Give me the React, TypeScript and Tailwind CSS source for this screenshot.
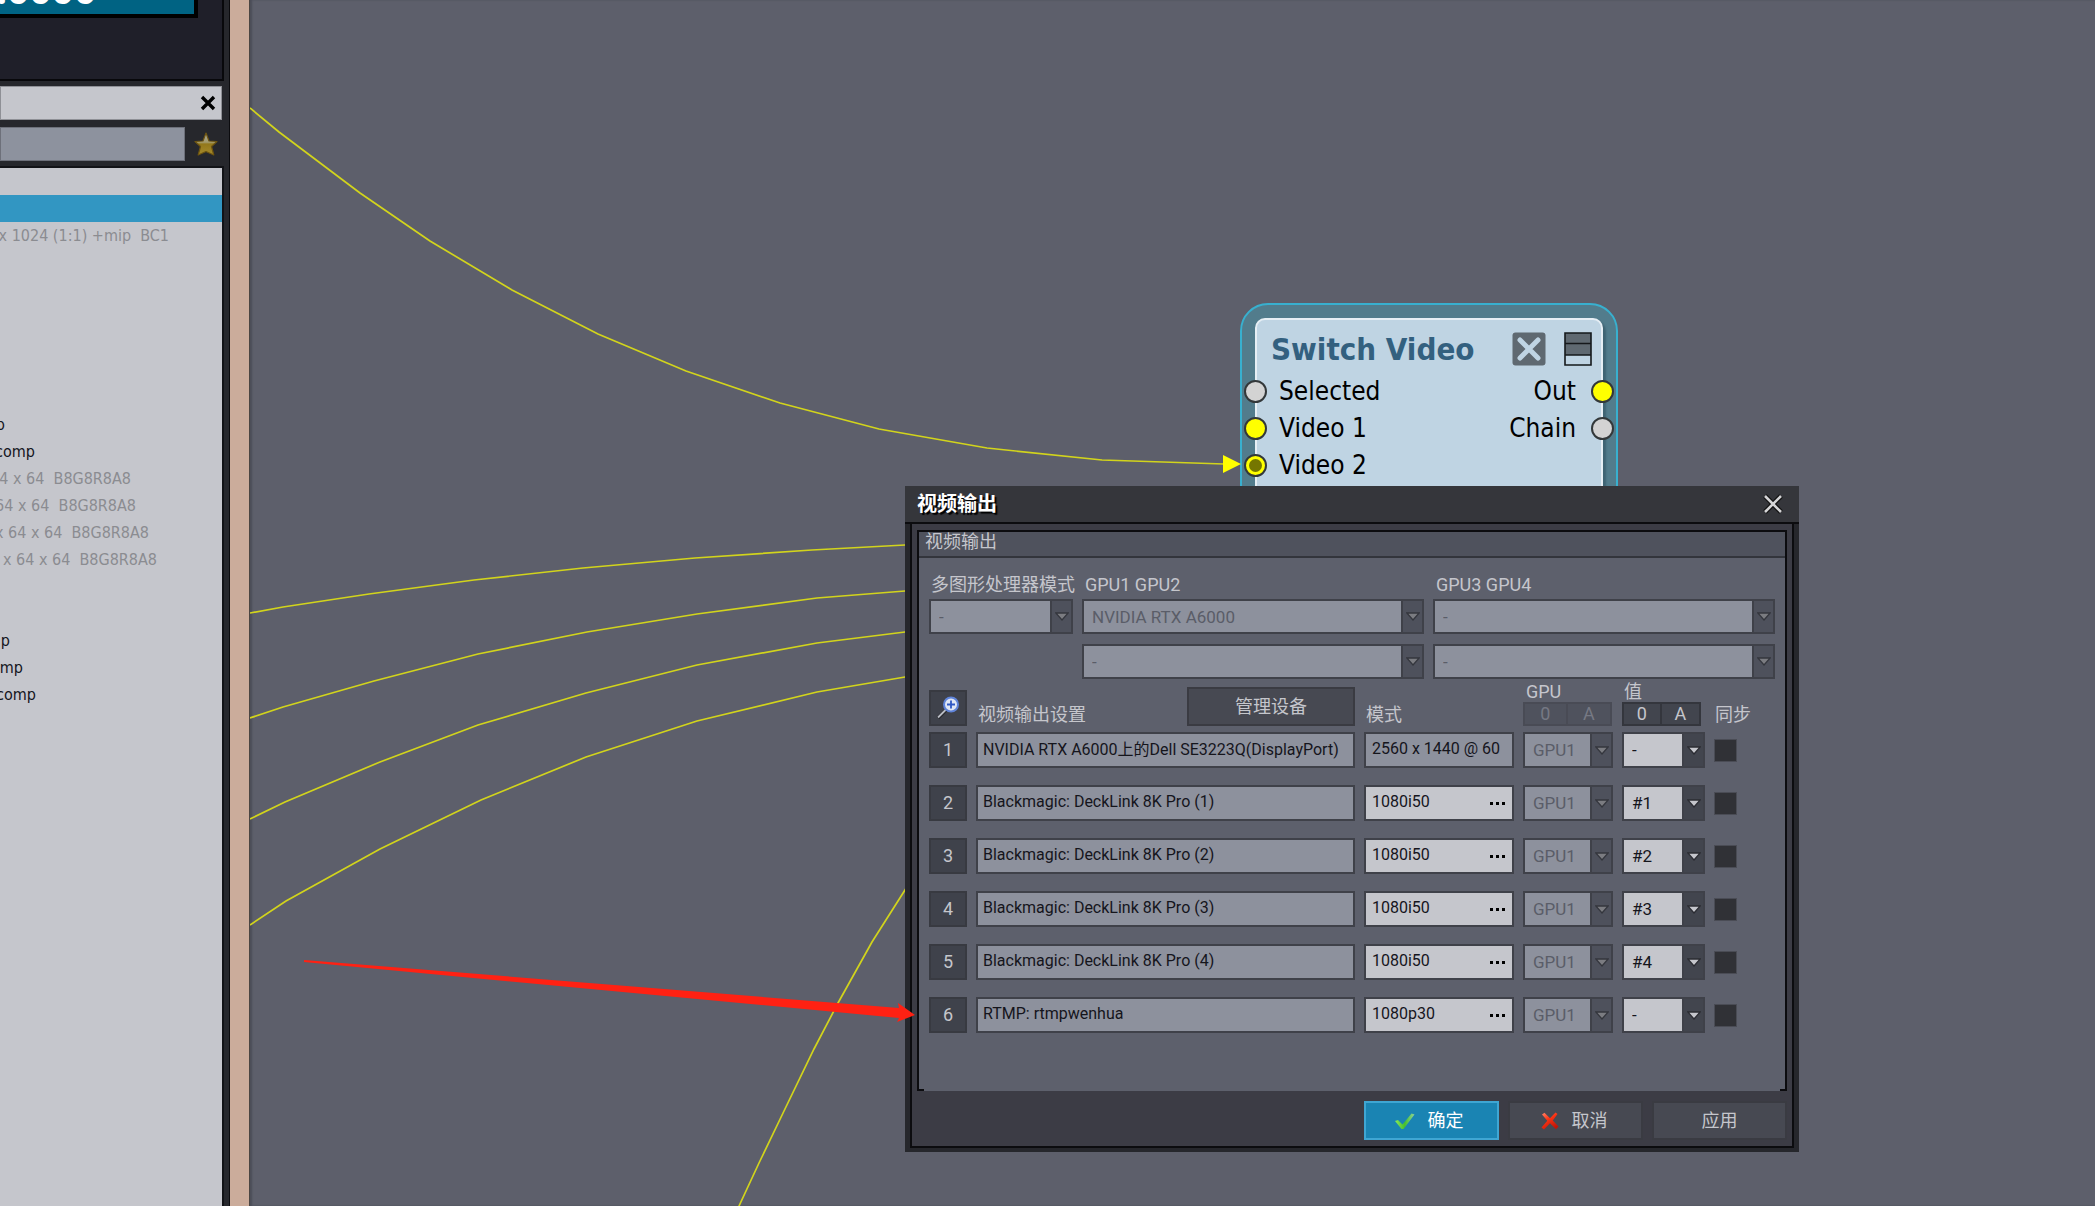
import React from "react";

const UI = "font-['Roboto','Noto_Sans_CJK_SC',sans-serif]";
const TREE = "font-['DejaVu_Sans_Condensed','DejaVu_Sans',sans-serif]";

type ListItem = { text: string; end: number; dim?: boolean } | null;

const listItems: ListItem[] = [
  { text: "x 1024 (1:1) +mip  BC1", end: 169, dim: true },
  null,
  null,
  null,
  null,
  null,
  null,
  { text: "p", end: 5 },
  { text: "comp", end: 35 },
  { text: "4 x 64  B8G8R8A8", end: 131, dim: true },
  { text: "64 x 64  B8G8R8A8", end: 136, dim: true },
  { text: "x 64 x 64  B8G8R8A8", end: 149, dim: true },
  { text: "x 64 x 64  B8G8R8A8", end: 157, dim: true },
  null,
  null,
  { text: "p", end: 10 },
  { text: "mp", end: 23 },
  { text: "comp", end: 36 },
];

const wires = [
  "250,108 279,132 360,193 430,241 512,290 598,334 686,371 780,403 879,429 987,448 1102,460 1224,464",
  "250,613 283,607 369,594 474,580 583,568 695,558 812,550 905,545 960,543",
  "250,718 283,707 374,681 478,654 587,632 697,614 817,598 905,591 960,587",
  "250,819 285,802 380,762 478,725 586,693 697,665 817,643 905,632 960,626",
  "250,925 286,901 380,849 481,800 586,757 697,721 817,692 905,677 960,668",
  "930,850 905,890 872,942 838,1003 814,1049 784,1111 759,1163 739,1206 720,1252",
];

const outputs = [
  { device: "NVIDIA RTX A6000上的Dell SE3223Q(DisplayPort)", mode: "2560 x 1440 @ 60", value: "-", fixed: true },
  { device: "Blackmagic: DeckLink 8K Pro (1)", mode: "1080i50", value: "#1" },
  { device: "Blackmagic: DeckLink 8K Pro (2)", mode: "1080i50", value: "#2" },
  { device: "Blackmagic: DeckLink 8K Pro (3)", mode: "1080i50", value: "#3" },
  { device: "Blackmagic: DeckLink 8K Pro (4)", mode: "1080i50", value: "#4" },
  { device: "RTMP: rtmpwenhua", mode: "1080p30", value: "-" },
];

function StarIcon() {
  return (
    <svg className="h-[26px] w-[26px]" viewBox="0 0 26 26" aria-hidden="true">
      <defs>
        <linearGradient id="star" x1="0" y1="0" x2="0" y2="1">
          <stop offset="0" stopColor="#a8a698" />
          <stop offset="0.42" stopColor="#a39a6c" />
          <stop offset="0.5" stopColor="#93781b" />
          <stop offset="1" stopColor="#a58a2c" />
        </linearGradient>
      </defs>
      <path
        d="M13 2 L16 10 L24 10.5 L18.5 15.5 L20.8 24 L13 20.5 L5.2 24 L7.5 15.5 L2 10.5 L10 10 Z"
        fill="url(#star)"
        stroke="#6d5410"
        strokeWidth="1.2"
        strokeLinejoin="round"
      />
    </svg>
  );
}

function Sidebar() {
  return (
    <aside className="flex h-full w-[250px] shrink-0">
      <div className="flex min-w-0 flex-1 flex-col bg-[#26272c]">
        <div className="mr-[5px] h-[81px] shrink-0 border-r-2 border-b-2 border-[#08080b] bg-[#1f1f29] pr-6">
          <div className="flex h-[18px] items-end overflow-hidden border-r-4 border-b-4 border-black bg-[#006383]">
            <p className="-ml-1 shrink-0 font-['Noto_Sans',sans-serif] text-[39px] leading-[50px] font-bold text-white">.0000</p>
          </div>
        </div>
        <div className="mt-[5px] mr-[7px] flex h-[34px] shrink-0 items-center justify-end border border-[#8f9096] bg-[#c5c6cc] pr-[5px]">
          <button aria-label="Close panel" className="flex h-4 w-4 items-center justify-center">
            <svg viewBox="0 0 16 16" className="h-4 w-4">
              <path d="M2 2 L14 14 M14 2 L2 14" stroke="#000" strokeWidth="3.4" />
            </svg>
          </button>
        </div>
        <div className="mt-[7px] mr-[7px] flex shrink-0 items-center gap-2">
          <input
            aria-label="Search resources"
            className="h-[34px] min-w-0 flex-1 border border-[#6d707a] bg-[#8d929e] px-2 outline-none"
          />
          <button aria-label="Favourites" className="mr-[3px]">
            <StarIcon />
          </button>
        </div>
        <div className="mt-[5px] mr-[5px] min-h-0 flex-1 overflow-hidden border-t-2 border-r-2 border-[#121317] bg-[#c5c6cc]">
          <ul className={`${TREE} text-[16px] leading-7`}>
            <li className="h-[27px]" />
            <li className="h-[27px] bg-[#3296c2]" />
            {listItems.map((item, i) => (
              <li key={i} className="h-[27px] overflow-hidden">
                {item && (
                  <div className="flex justify-end" style={{ width: item.end }}>
                    <span className={`shrink-0 whitespace-pre ${item.dim ? "text-[#8b8c91]" : "text-[#14141c]"}`}>
                      {item.text}
                    </span>
                  </div>
                )}
              </li>
            ))}
          </ul>
        </div>
      </div>
      <div className="w-[21px] shrink-0 border-r border-l border-r-[#4a4542] border-l-[#0b0b0e] bg-[#cbac9b]" />
    </aside>
  );
}

function Port({ tone }: { tone: "gray" | "yellow" | "linked" }) {
  return (
    <span
      className={`flex h-[23px] w-[23px] shrink-0 items-center justify-center rounded-full border-2 border-[#33383a] ${
        tone === "gray" ? "bg-[#d3d3d3]" : "bg-[#ffff00]"
      }`}
    >
      {tone === "linked" && <span className="h-[13px] w-[13px] rounded-full bg-[#757600]" />}
    </span>
  );
}

const nodeRows: { left: string; leftTone: "gray" | "yellow" | "linked"; right?: string; rightTone?: "gray" | "yellow" }[] = [
  { left: "Selected", leftTone: "gray", right: "Out", rightTone: "yellow" },
  { left: "Video 1", leftTone: "yellow", right: "Chain", rightTone: "gray" },
  { left: "Video 2", leftTone: "linked" },
];

function SwitchNode() {
  return (
    <section
      className={`absolute top-[303px] left-[990px] h-[260px] w-[378px] rounded-[28px] border-2 border-[#38b0cf] bg-[#527c8c] p-[13px] ${TREE}`}
    >
      <div className="h-full rounded-[10px] border-2 border-[#e6eef4] bg-[#bfd4e3] shadow-[3px_3px_2px_#3f6473]">
        <header className="flex h-[53px] items-center pt-1 pr-[9px] pl-3.5">
          <h2 className="flex-1 text-[31px] leading-10 font-bold whitespace-nowrap text-[#33607f]">Switch Video</h2>
          <button aria-label="Disable node" className="mr-[18px]">
            <svg viewBox="0 0 34 34" className="h-[34px] w-[34px]">
              <rect x="0.5" y="0.5" width="33" height="33" rx="3" fill="#5f6971" />
              <path d="M8 8 L26 26 M26 8 L8 26" stroke="#bfd4e3" strokeWidth="5" strokeLinecap="round" />
            </svg>
          </button>
          <button aria-label="Node view">
            <svg viewBox="0 0 28 34" className="h-[34px] w-7">
              <rect x="1" y="1" width="26" height="32" fill="#bfd4e3" />
              <rect x="1" y="1" width="26" height="22" fill="#5f6971" />
              <path d="M1 1 H27 V33 H1 Z M1 11.500 H27 M1 23 H27" fill="none" stroke="#15181b" strokeWidth="1.600" />
            </svg>
          </button>
        </header>
        <ul className="-mx-[13px] text-[26px] leading-[37px] text-black">
          {nodeRows.map((row) => (
            <li key={row.left} className="flex h-[37px] items-center">
              <Port tone={row.leftTone} />
              <span className="ml-3 flex-1">{row.left}</span>
              {row.right && <span className="mr-[15px]">{row.right}</span>}
              {row.rightTone && <Port tone={row.rightTone} />}
            </li>
          ))}
        </ul>
      </div>
    </section>
  );
}

function Dropdown({
  label,
  value,
  disabled,
  height = "h-[35px]",
}: {
  label: string;
  value: string;
  disabled?: boolean;
  height?: string;
}) {
  return (
    <div className={`relative w-full border-2 border-[#3f4149] ${height}`}>
      <select
        aria-label={label}
        disabled={disabled}
        defaultValue={value}
        className={`h-full w-full appearance-none pr-6 pl-2 text-[17px] leading-6 opacity-100 outline-none ${
          disabled ? "bg-[#8d919d] text-[#5a5d68]" : "bg-[#c5c6cc] text-[#15151c]"
        }`}
      >
        <option>{value}</option>
      </select>
      <span
        className={`pointer-events-none absolute inset-y-0 right-0 flex w-[21px] items-center justify-center border-l-2 border-[#3f4149] ${
          disabled ? "bg-[#4e515c]" : "bg-[#42454e]"
        }`}
      >
        <svg viewBox="0 0 14 9" className="h-[9px] w-3.5">
          <path
            d="M0.8 1 H13.200 L7 8 Z"
            fill={disabled ? "#7b7c81" : "#c5c6cc"}
            stroke={disabled ? "#34363d" : "#2b2c32"}
            strokeWidth="1.300"
          />
        </svg>
      </span>
    </div>
  );
}

function MagnifierIcon() {
  return (
    <svg viewBox="0 0 24 26" className="h-[26px] w-6" aria-hidden="true">
      <path d="M2 23 L10 15" stroke="#25262b" strokeWidth="3.500" />
      <path d="M2 22.500 L10 14.500" stroke="#b9bcc4" strokeWidth="1.800" />
      <circle cx="15" cy="9.500" r="7" fill="#dfe6f4" stroke="#5f83d8" strokeWidth="2" />
      <path d="M15 5.500 V13.500 M11 9.500 H19" stroke="#2f58c4" strokeWidth="1.800" />
    </svg>
  );
}

const darkButton = "border-2 border-[#3a3b42] bg-[#474952] text-[#c5c6cc]";
const outputGrid = "grid grid-cols-[38px_minmax(0,1fr)_150px_90px_83px_61px] gap-x-[9px]";

function OutputDialog() {
  return (
    <div
      role="dialog"
      aria-label="视频输出"
      className={`absolute top-[486px] left-[655px] flex w-[894px] flex-col bg-[#26272c] text-[18px] leading-6 text-[#c5c6cc] ${UI}`}
    >
      <header className="flex h-[38px] items-center justify-between border-b-2 border-[#0c0c0f] bg-[#35363b] pr-4 pl-3">
        <h1 className="text-[20px] leading-6 font-bold text-white [text-shadow:2px_2px_1px_#000]">视频输出</h1>
        <button aria-label="关闭">
          <svg viewBox="0 0 20 20" className="h-5 w-5">
            <path d="M2 2 L18 18 M18 2 L2 18" stroke="#111" strokeWidth="5" />
            <path d="M2 2 L18 18 M18 2 L2 18" stroke="#d4d4d6" strokeWidth="2.600" />
          </svg>
        </button>
      </header>

      <div className="mx-[5px] mb-1 border-2 border-t-0 border-[#0c0c0f] bg-[#3c3c45] px-[5px] pt-1.5 pb-1.5">
        <fieldset className="relative border-x-2 border-t-2 border-[#0c0c0f] bg-[#5d606c]">
          <h2 className="h-[26px] border-b-2 border-[#33353c] bg-[#4f525d] pl-1.5 leading-5">视频输出</h2>

          <div className="px-[10px] pt-[15px] pb-[58px]">
            <div className="grid grid-cols-[144px_minmax(0,1fr)_minmax(0,1fr)] gap-x-[9px] gap-y-[10px]">
              <div className="flex flex-col gap-0.5">
                <span className="pl-0.5 whitespace-nowrap">多图形处理器模式</span>
                <Dropdown label="多图形处理器模式" value="-" disabled />
              </div>
              <div className="flex flex-col gap-0.5">
                <span className="pl-[3px]">GPU1 GPU2</span>
                <Dropdown label="GPU1" value="NVIDIA RTX A6000" disabled />
              </div>
              <div className="flex flex-col gap-0.5">
                <span className="pl-[3px]">GPU3 GPU4</span>
                <Dropdown label="GPU3" value="-" disabled />
              </div>
              <span />
              <Dropdown label="GPU2" value="-" disabled />
              <Dropdown label="GPU4" value="-" disabled />
            </div>

            <div className={`${outputGrid} items-end pt-[3px] pb-1.5`}>
              <button aria-label="查找" className="flex h-9 items-center justify-center border-2 border-[#383a41] bg-[#3f424b]">
                <MagnifierIcon />
              </button>
              <div className="flex items-end justify-between">
                <span className="pl-0.5 leading-[22px]">视频输出设置</span>
                <button className={`h-[39px] w-[168px] ${darkButton}`}>管理设备</button>
              </div>
              <span className="pl-0.5 leading-[22px]">模式</span>
              <div>
                <span className="block pl-[3px] leading-5">GPU</span>
                <div className="grid h-6 grid-cols-2 pr-px">
                  <button disabled className="border-2 border-[#494b55] bg-[#4f525d] leading-5 text-[#767984]">
                    0
                  </button>
                  <button disabled className="border-2 border-l-0 border-[#494b55] bg-[#4f525d] leading-5 text-[#767984]">
                    A
                  </button>
                </div>
              </div>
              <div>
                <span className="block pl-0.5 leading-5">值</span>
                <div className="grid h-6 grid-cols-2 pr-1">
                  <button className="border-2 border-[#34363d] bg-[#42454e] leading-5">0</button>
                  <button className="border-2 border-l-0 border-[#34363d] bg-[#42454e] leading-5">A</button>
                </div>
              </div>
              <span className="pl-px leading-[22px]">同步</span>
            </div>

            <div className="flex flex-col gap-[17px]">
              {outputs.map((row, i) => (
                <div key={i} className={`${outputGrid} items-center`}>
                  <button className="h-9 border-2 border-[#383a41] bg-[#3f424b]">{i + 1}</button>
                  <input
                    aria-label={`视频输出 ${i + 1}`}
                    readOnly
                    value={row.device}
                    className="h-9 w-full border-2 border-[#3f4149] bg-[#8d919d] px-[5px] pb-1 text-[16px] text-[#15151c] outline-none"
                  />
                  <div
                    className={`flex h-9 items-center border-2 border-[#3f4149] pr-[7px] ${
                      row.fixed ? "bg-[#8d919d]" : "bg-[#c5c6cc]"
                    }`}
                  >
                    <input
                      aria-label={`模式 ${i + 1}`}
                      readOnly
                      value={row.mode}
                      className="h-full min-w-0 flex-1 bg-transparent pb-1 pl-1.5 text-[16px] text-[#15151c] outline-none"
                    />
                    {!row.fixed && (
                      <button aria-label={`选择模式 ${i + 1}`} className="flex h-full items-center gap-[3px]">
                        <span className="h-[3px] w-[3px] bg-black" />
                        <span className="h-[3px] w-[3px] bg-black" />
                        <span className="h-[3px] w-[3px] bg-black" />
                      </button>
                    )}
                  </div>
                  <Dropdown label={`GPU ${i + 1}`} value="GPU1" disabled height="h-9" />
                  <Dropdown label={`值 ${i + 1}`} value={row.value} height="h-9" />
                  <input
                    type="checkbox"
                    aria-label={`同步 ${i + 1}`}
                    className="h-[23px] w-[23px] appearance-none border border-[#4a4c55] bg-[#303136]"
                  />
                </div>
              ))}
            </div>
          </div>
          <span className="absolute bottom-0 left-0 h-0.5 w-[5px] bg-[#0c0c0f]" />
          <span className="absolute right-0 bottom-0 h-0.5 w-[5px] bg-[#0c0c0f]" />
        </fieldset>

        <footer className="flex justify-end gap-[9px] pt-2.5">
          <button className="flex h-[39px] w-[135px] items-center justify-center gap-3 border-2 border-[#3fa6d3] bg-[#1a84b3] pr-1.5 text-white">
            <svg viewBox="0 0 22 18" className="h-[18px] w-[22px]">
              <defs>
                <linearGradient id="ok" x1="0" y1="0" x2="1" y2="0">
                  <stop offset="0" stopColor="#8bea5a" />
                  <stop offset="0.5" stopColor="#46c02c" />
                  <stop offset="1" stopColor="#8fd39a" />
                </linearGradient>
              </defs>
              <path d="M1 9 L4 8 L8.500 12.500 L17.500 1.500 L20.500 2.500 L9.500 17 L7.500 17 Z" fill="url(#ok)" />
            </svg>
            确定
          </button>
          <button className={`flex h-[39px] w-[135px] items-center justify-center gap-3 pr-1 ${darkButton}`}>
            <svg viewBox="0 0 20 18" className="h-[18px] w-5">
              <defs>
                <linearGradient id="cancel" x1="0" y1="0" x2="0.6" y2="1">
                  <stop offset="0" stopColor="#ff8a70" />
                  <stop offset="0.45" stopColor="#fb3414" />
                  <stop offset="1" stopColor="#c01508" />
                </linearGradient>
              </defs>
              <path
                d="M2 2.500 L4.500 0.800 L10 6.200 L15.500 0.500 L17.500 2 L12.800 8.600 L18.500 14.500 L16 17.300 L10 11.300 L4 17.500 L1.500 15.500 L7.300 8.800 Z"
                fill="url(#cancel)"
              />
            </svg>
            取消
          </button>
          <button className={`h-[39px] w-[135px] ${darkButton}`}>应用</button>
        </footer>
      </div>
    </div>
  );
}

export default function App() {
  return (
    <div className="flex h-screen w-full overflow-hidden bg-[#5d5f6b]">
      <Sidebar />
      <main className="relative min-w-0 flex-1 overflow-hidden shadow-[inset_2px_0_2px_#4b4d58]">
        <SwitchNode />
        <svg className="absolute inset-0 h-full w-full" aria-hidden="true">
          <g transform="translate(-250 0)">
            {wires.map((points) => (
              <polyline key={points} points={points} fill="none" stroke="#d2d41c" strokeWidth="1.700" />
            ))}
            <path d="M1223 455 L1241 464 L1223 473 Z" fill="#ffff00" />
          </g>
        </svg>
        <OutputDialog />
        <svg className="pointer-events-none absolute inset-0 h-full w-full" aria-hidden="true">
          <path
            transform="translate(-250 0)"
            d="M304 960 L899 1008 L898 1003 L915 1015 L897 1022 L899 1018 L304 962 Z"
            fill="#ff2113"
          />
        </svg>
      </main>
    </div>
  );
}
